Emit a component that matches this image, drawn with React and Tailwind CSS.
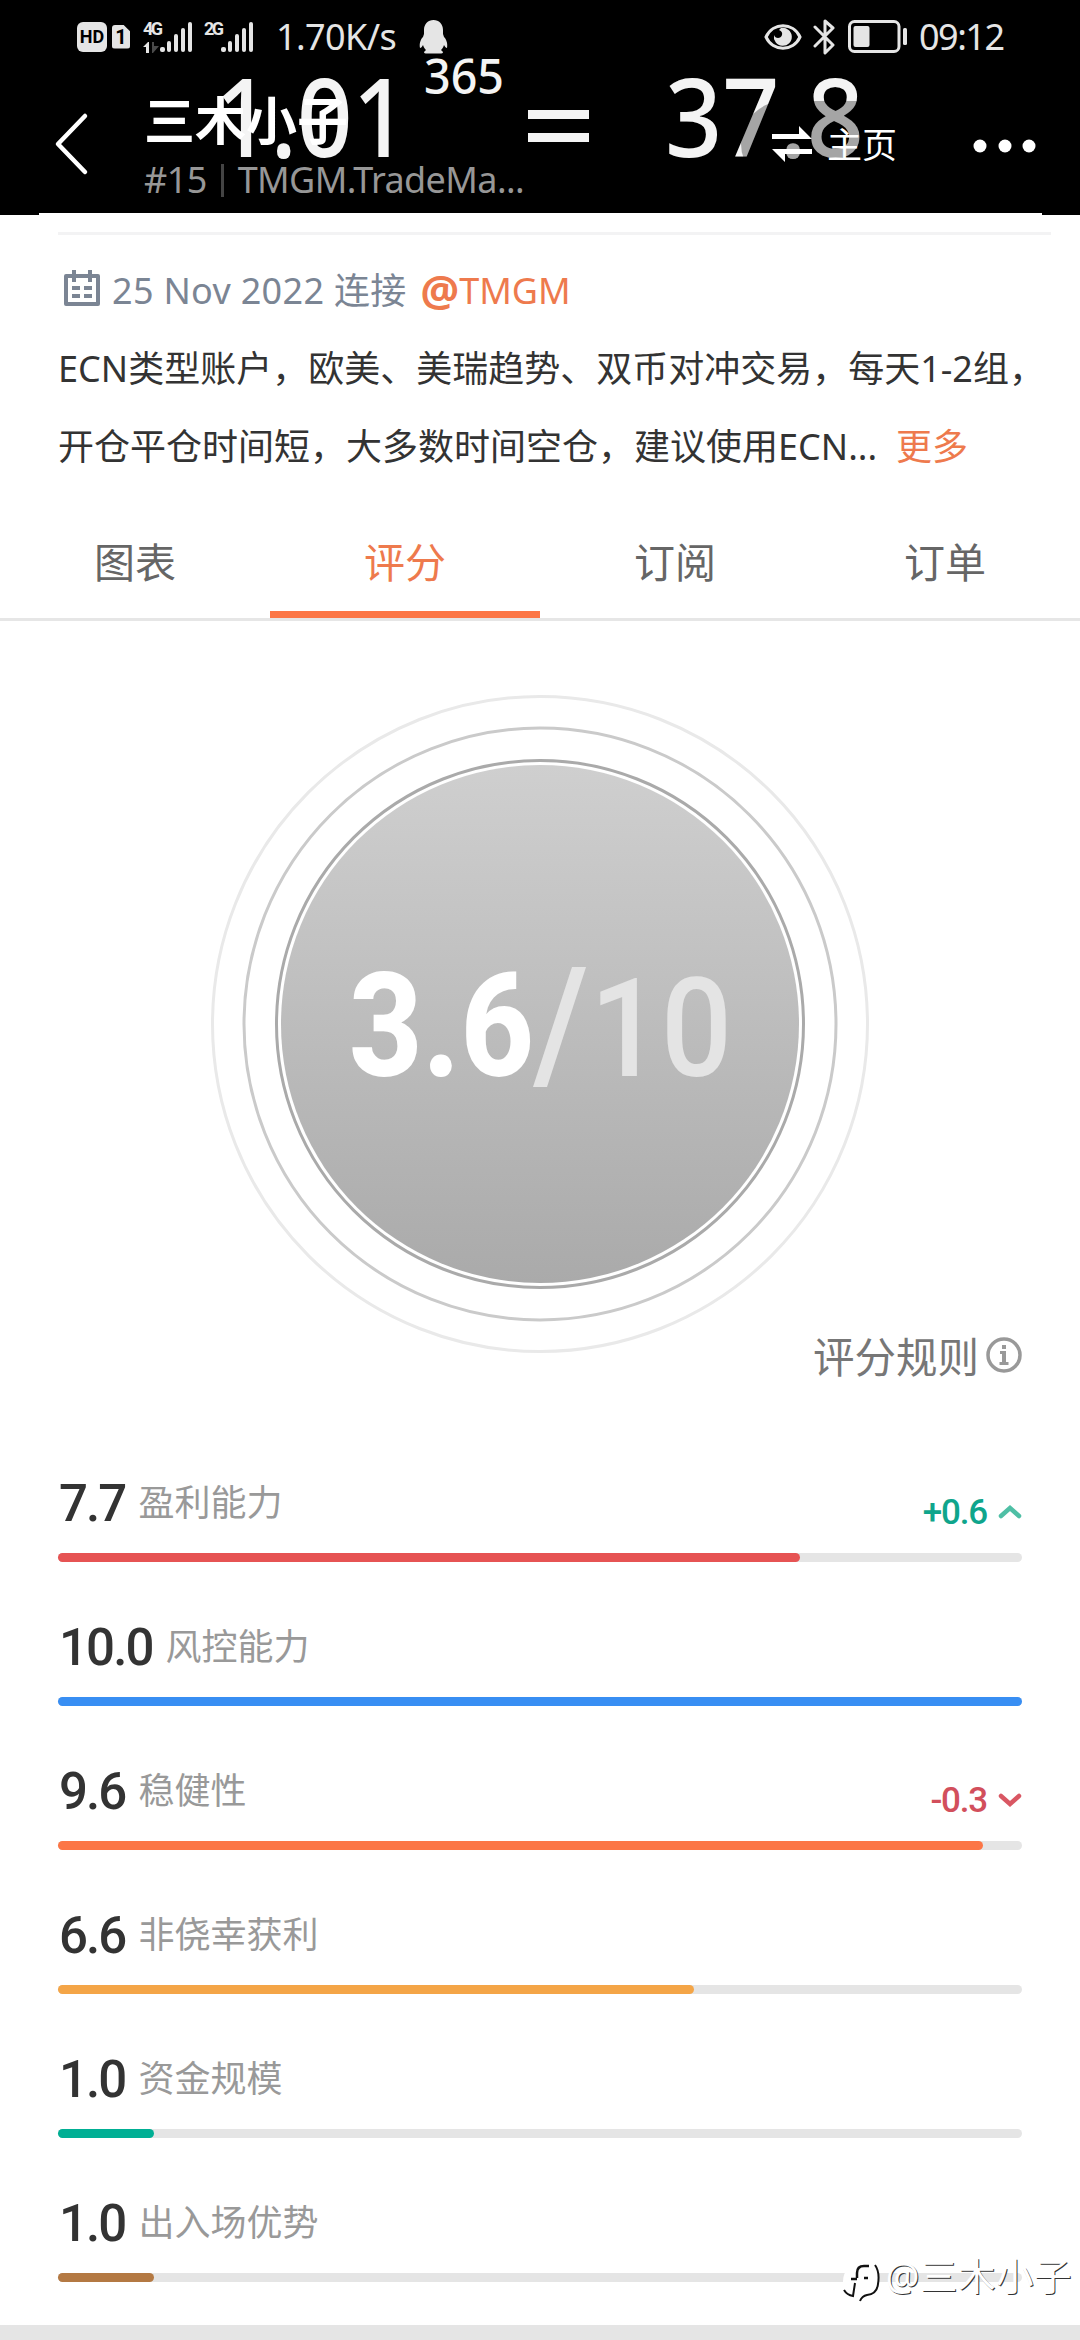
import React, { useState } from 'react';

const TABS = ['图表', '评分', '订阅', '订单'];

const SCORES = [
  { label: '盈利能力', value: 7.7, change: 0.6, color: 'bg-[#e65353]' },
  { label: '风控能力', value: 10, color: 'bg-[#388ef3]' },
  { label: '稳健性', value: 9.6, change: -0.3, color: 'bg-[#fc7646]' },
  { label: '非侥幸获利', value: 6.6, color: 'bg-[#f4a547]' },
  { label: '资金规模', value: 1, color: 'bg-[#00af94]' },
  { label: '出入场优势', value: 1, color: 'bg-[#b47943]' },
];

// Cover picture behind the header
function Banner() {
  return (
    <svg className="absolute inset-0 w-full h-full" viewBox="0 0 1080 215">
      <g fill="#f4f4f4" fontFamily="'Noto Sans', sans-serif" fontWeight="500" fontSize="109">
        <text x="215" y="157" textLength="193" lengthAdjust="spacingAndGlyphs">1.01</text>
        <text x="665" y="157" textLength="199" lengthAdjust="spacingAndGlyphs">37.8</text>
        <text x="424" y="94" fontSize="49" textLength="80" lengthAdjust="spacingAndGlyphs">365</text>
      </g>
      <rect x="528" y="110" width="61" height="9" fill="#f4f4f4" />
      <rect x="528" y="133" width="61" height="9" fill="#f4f4f4" />
      <rect x="39" y="213" width="1003" height="2" fill="#ffffff" />
    </svg>
  );
}

function SignalBars() {
  return (
    <svg width="34" height="32" viewBox="0 0 34 32" fill="#e5e5e5">
      <rect x="0" y="26" width="5" height="5" rx="2" />
      <rect x="7" y="20" width="4" height="11" rx="2" />
      <rect x="14" y="13" width="4" height="18" rx="2" />
      <rect x="21" y="7" width="4" height="24" rx="2" />
      <rect x="28" y="1" width="4" height="30" rx="2" />
    </svg>
  );
}

function StatusBar() {
  return (
    <div className="relative flex items-center justify-between h-[73px] pl-[77px] pr-[77px] text-[#e5e5e5]">
      <div className="flex items-center">
        <span className="flex items-center justify-center w-[30px] h-[30px] rounded-[6px] bg-[#e5e5e5] text-black text-[18px] leading-none font-bold font-['Roboto',sans-serif]">HD</span>
        <span className="flex items-center justify-center w-[18px] h-6 ml-[5px] rounded-[3px] bg-[#e5e5e5] text-black text-[20px] leading-none font-bold font-['Roboto',sans-serif] [clip-path:polygon(0_0,62%_0,100%_28%,100%_100%,0_100%)]">1</span>
        <div className="flex flex-col justify-between w-[17px] h-8 ml-[13px]">
          <span className="text-[18px] leading-[16px] tracking-[-2.5px] font-bold font-['Roboto',sans-serif]">4G</span>
          <svg width="18" height="11" viewBox="0 0 18 11">
            <path d="M0 5 L5 0 H6 V11 H3 V5 Z" fill="#e5e5e5" />
            <path d="M9 0 H11 V4 H16 L10 11 H9 Z" fill="#4a4a4a" />
          </svg>
        </div>
        <SignalBars />
        <div className="flex flex-col w-[17px] h-8 ml-[10px]">
          <span className="text-[18px] leading-[16px] tracking-[-2.5px] font-bold font-['Roboto',sans-serif]">2G</span>
        </div>
        <SignalBars />
        <span className="ml-[21px] w-[121px] whitespace-nowrap text-[36px] leading-none tracking-[-0.6px] font-['Noto_Sans',sans-serif]">1.70K/s</span>
        <svg className="ml-[22px]" width="29" height="34" viewBox="0 0 29 34" fill="#e5e5e5">
          <path d="M14.5 0 C20 0 24 4 24 10 V14 L25 17 C27 19 29 23 28 28 C27 28 26 27 25 25 C24 28 23 29 22 30 L24 32 C24 33 23 33.5 21 33.5 H8 C6 33.5 5 33 5 32 L7 30 C6 29 5 28 4 25 C3 27 2 28 1 28 C0 23 2 19 4 17 L5 14 V10 C5 4 9 0 14.5 0 Z" />
        </svg>
      </div>
      <div className="flex items-center">
        <svg width="38" height="28" viewBox="0 0 38 28" fill="none">
          <path d="M2 14 C9 -1 29 -1 36 14 C29 29 9 29 2 14 Z" stroke="#e5e5e5" strokeWidth="3" />
          <path d="M17 5 A9 9 0 1 1 10 12 C11 16 17 16 18 12 C18.500 10 18 8 15 7 Z" fill="#e5e5e5" />
        </svg>
        <svg className="ml-[11px]" width="22" height="36" viewBox="0 0 22 36" fill="none" stroke="#e5e5e5" strokeWidth="3" strokeLinejoin="round" strokeLinecap="round">
          <path d="M2 8 L20 26 L12 34 V2 L20 9 L2 27" />
        </svg>
        <svg className="ml-[13px]" width="60" height="33" viewBox="0 0 60 33">
          <rect x="1.500" y="1.500" width="49.500" height="30" rx="5" fill="none" stroke="#e5e5e5" strokeWidth="3" />
          <rect x="5.500" y="6" width="16" height="21" rx="2" fill="#e5e5e5" />
          <rect x="55" y="8" width="4" height="17" rx="1.500" fill="#e5e5e5" />
        </svg>
        <span className="ml-[11px] w-[84px] whitespace-nowrap text-[36px] leading-none tracking-[-1.5px] font-['Noto_Sans',sans-serif]">09:12</span>
      </div>
    </div>
  );
}

function NavBar() {
  return (
    <div className="relative flex items-center h-[142px] pl-[53px] pr-[44px] text-white">
      <svg width="36" height="64" viewBox="0 0 36 64" fill="none" stroke="#ffffff" strokeWidth="4.500" strokeLinecap="round" strokeLinejoin="round">
        <path d="M32 4 L5 32 L32 60" />
      </svg>
      <div className="flex flex-col ml-[55px] mt-[12px] w-[400px]">
        <div className="text-[51px] leading-[60px] font-bold">三木小子</div>
        <div className="flex items-center h-[60px] text-[36px] tracking-[-0.6px] text-[#979797] whitespace-nowrap font-['Noto_Sans',sans-serif]">
          <span>#15</span>
          <span className="w-[3px] h-[33px] mx-[14px] bg-[#444444]"></span>
          <span>TMGM.TradeMa...</span>
        </div>
      </div>
      <button className="flex items-center h-[86px] w-[186px] ml-[197px] pl-[31px] rounded-full bg-black/32">
        <svg width="40" height="36" viewBox="0 0 40 36" fill="#ffffff">
          <path d="M0 8 H27 V0 L40 13 H0 Z" />
          <path d="M40 28 H13 V36 L0 23 H40 Z" />
        </svg>
        <span className="ml-[15px] text-[35px] leading-none">主页</span>
      </button>
      <svg className="ml-auto mt-[3px]" width="64" height="14" viewBox="0 0 64 14" fill="#ffffff">
        <circle cx="8" cy="7" r="6.500" />
        <circle cx="33" cy="7" r="6.500" />
        <circle cx="57" cy="7" r="6.500" />
      </svg>
    </div>
  );
}

function ScoreGauge() {
  return (
    <svg className="mx-auto block" width="660" height="660" viewBox="0 0 660 660">
      <defs>
        <linearGradient id="gauge" x1="0" y1="0" x2="0" y2="1">
          <stop offset="0" stopColor="#cfcfcf" />
          <stop offset="1" stopColor="#aaaaaa" />
        </linearGradient>
      </defs>
      <circle cx="330" cy="330" r="327.500" fill="none" stroke="#e9e9e9" strokeWidth="3" />
      <circle cx="330" cy="330" r="296" fill="none" stroke="#cacaca" strokeWidth="3" />
      <circle cx="330" cy="330" r="263.500" fill="none" stroke="#aaaaaa" strokeWidth="3" />
      <circle cx="330" cy="330" r="259" fill="url(#gauge)" />
      <g fontFamily="Roboto, sans-serif">
        <text x="139" y="382" fontSize="144" fontWeight="800" fill="#ffffff" textLength="185" lengthAdjust="spacingAndGlyphs">3.6</text>
        <g fill="#e4e4e4" fontWeight="500">
          <path d="M362 273 H376 L337 393 H323 Z" />
          <text x="380" y="382" fontSize="138" textLength="142" lengthAdjust="spacingAndGlyphs">10</text>
        </g>
      </g>
    </svg>
  );
}

function ScoreRow({ label, value, change, color }) {
  return (
    <div className="flex flex-col justify-end h-36">
      <div className="flex items-center h-[60px]">
        <span className="pl-px text-[51px] leading-none font-medium tracking-[-1.9px] text-[#333333] font-['Roboto',sans-serif]">{value.toFixed(1)}</span>
        <span className="ml-[13px] text-[36px] leading-none text-[#999999]">{label}</span>
        {change && (
          <div className={`flex items-center ml-auto mt-[18px] ${change > 0 ? 'text-[#0fa58c]' : 'text-[#d24f5c]'}`}>
            <span className="text-[35px] leading-none font-medium tracking-[-1.2px] font-['Roboto',sans-serif]">
              {change > 0 ? '+' : '-'}{Math.abs(change).toFixed(1)}
            </span>
            <svg className="ml-[11px]" width="24" height="16" viewBox="0 0 24 16" fill="none" strokeWidth="4.500" strokeLinecap="round">
              {change > 0
                ? <path d="M3 12 L12 4 L21 12" stroke="#4fbfa5" />
                : <path d="M3 4 L12 12 L21 4" stroke="#d95763" />}
            </svg>
          </div>
        )}
      </div>
      <div className="h-[9px] mt-[20px] rounded-full bg-[#e5e5e5]">
        <div className={`h-full rounded-full ${color}`} style={{ width: `${value * 10}%` }}></div>
      </div>
    </div>
  );
}

export default function App() {
  const [activeTab, setActiveTab] = useState('评分');

  return (
    <div className="relative w-[1080px] h-[2340px] overflow-hidden bg-white font-['Noto_Sans','Noto_Sans_CJK_SC',sans-serif]">
      <header className="relative h-[215px] bg-black">
        <Banner />
        <StatusBar />
        <NavBar />
      </header>

      {/* Intro */}
      <div className="mt-[17px] ml-[58px] mr-[29px] h-[3px] bg-[#f3f3f4]"></div>
      <div className="flex items-center h-[60px] mt-[26px] pl-16 text-[36px] leading-none text-[#7b8594] whitespace-nowrap">
        <svg className="-mt-1.5" width="36" height="36" viewBox="0 0 36 36" fill="#7b8594">
          <path d="M8 0 H12 V4 H24 V0 H28 V4 H34 Q36 4 36 6 V34 Q36 36 34 36 H2 Q0 36 0 34 V6 Q0 4 2 4 H8 Z M4 8 V32 H32 V8 H28 V12 H24 V8 H12 V12 H8 V8 Z" fillRule="evenodd" />
          <path d="M8 16 H16 V20 H8 Z M20 16 H28 V20 H20 Z M8 24 H16 V28 H8 Z M20 24 H28 V28 H20 Z" />
        </svg>
        <span className="ml-[12px] tracking-[0.3px]">25 Nov 2022 连接</span>
        <span className="flex items-center ml-[14px] text-[#ee7a4d]">
          <b className="text-[43px] leading-[36px]">@</b>
          <span>TMGM</span>
        </span>
      </div>
      <div className="mt-[9px] pl-[58px] text-[36px] leading-[78px] text-[#333333] whitespace-nowrap">
        <div>ECN类型账户，欧美、美瑞趋势、双币对冲交易，每天1-2组，</div>
        <div>开仓平仓时间短，大多数时间空仓，建议使用ECN...<span className="ml-[19px] text-[#ee7a4d]">更多</span></div>
      </div>

      {/* Tabs */}
      <div className="grid grid-cols-4 h-[114px] mt-[21px] border-b-[3px] border-[#e6e6e6]">
        {TABS.map(tab => (
          <button
            key={tab}
            onClick={() => setActiveTab(tab)}
            className={`relative text-[41px] leading-none ${activeTab === tab ? 'text-[#ee7a4d]' : 'text-[#666666]'}`}
          >
            {tab}
            {activeTab === tab && <span className="absolute left-0 bottom-0 w-full h-[7px] bg-[#fc7646]"></span>}
          </button>
        ))}
      </div>

      <div className="mt-[73px]">
        <ScoreGauge />
      </div>

      <div className="flex items-center justify-end h-11 -mt-[19px] pr-[58px] text-[41.500px] leading-none text-[#777777]">
        <span className="mt-[2px]">评分规则</span>
        <svg className="ml-[7px] -mt-1" width="36" height="36" viewBox="0 0 36 36" fill="#999999">
          <circle cx="18" cy="18" r="16" fill="none" stroke="#999999" strokeWidth="3.500" />
          <path d="M16 8 H20 V12 H16 Z M14 14 H20 V25 H22.500 V28 H13.500 V25 H16 V17 H14 Z" />
        </svg>
      </div>

      {/* Score list */}
      <div className="mt-[39px] px-[58px]">
        {SCORES.map(score => (
          <ScoreRow key={score.label} {...score} />
        ))}
      </div>
      <div className="mt-[43px] h-[15px] bg-[#e5e5e5]"></div>

      {/* Watermark */}
      <div className="absolute right-[8px] top-[2254px] flex items-center h-11 text-[37.500px] leading-none text-white [text-shadow:1px_1px_0_#333333]">
        <svg className="mt-4" width="38" height="40" viewBox="0 0 38 40" fill="none">
          <circle cx="19" cy="17" r="18" fill="#ffffff" />
          <path d="M27 2 H22 Q15 2 15 9 V14 M9 15 H15 M22 14 H26" stroke="#111111" strokeWidth="2.500" />
          <path d="M33 1 Q38 8 36 20 Q35 30 25 31 Q20 32 18 37 M2 26 Q5 31 11 32 L13 19" stroke="#111111" strokeWidth="2" />
        </svg>
        <span className="ml-[6px] tracking-[0.5px]">@三木小子</span>
      </div>
    </div>
  );
}
